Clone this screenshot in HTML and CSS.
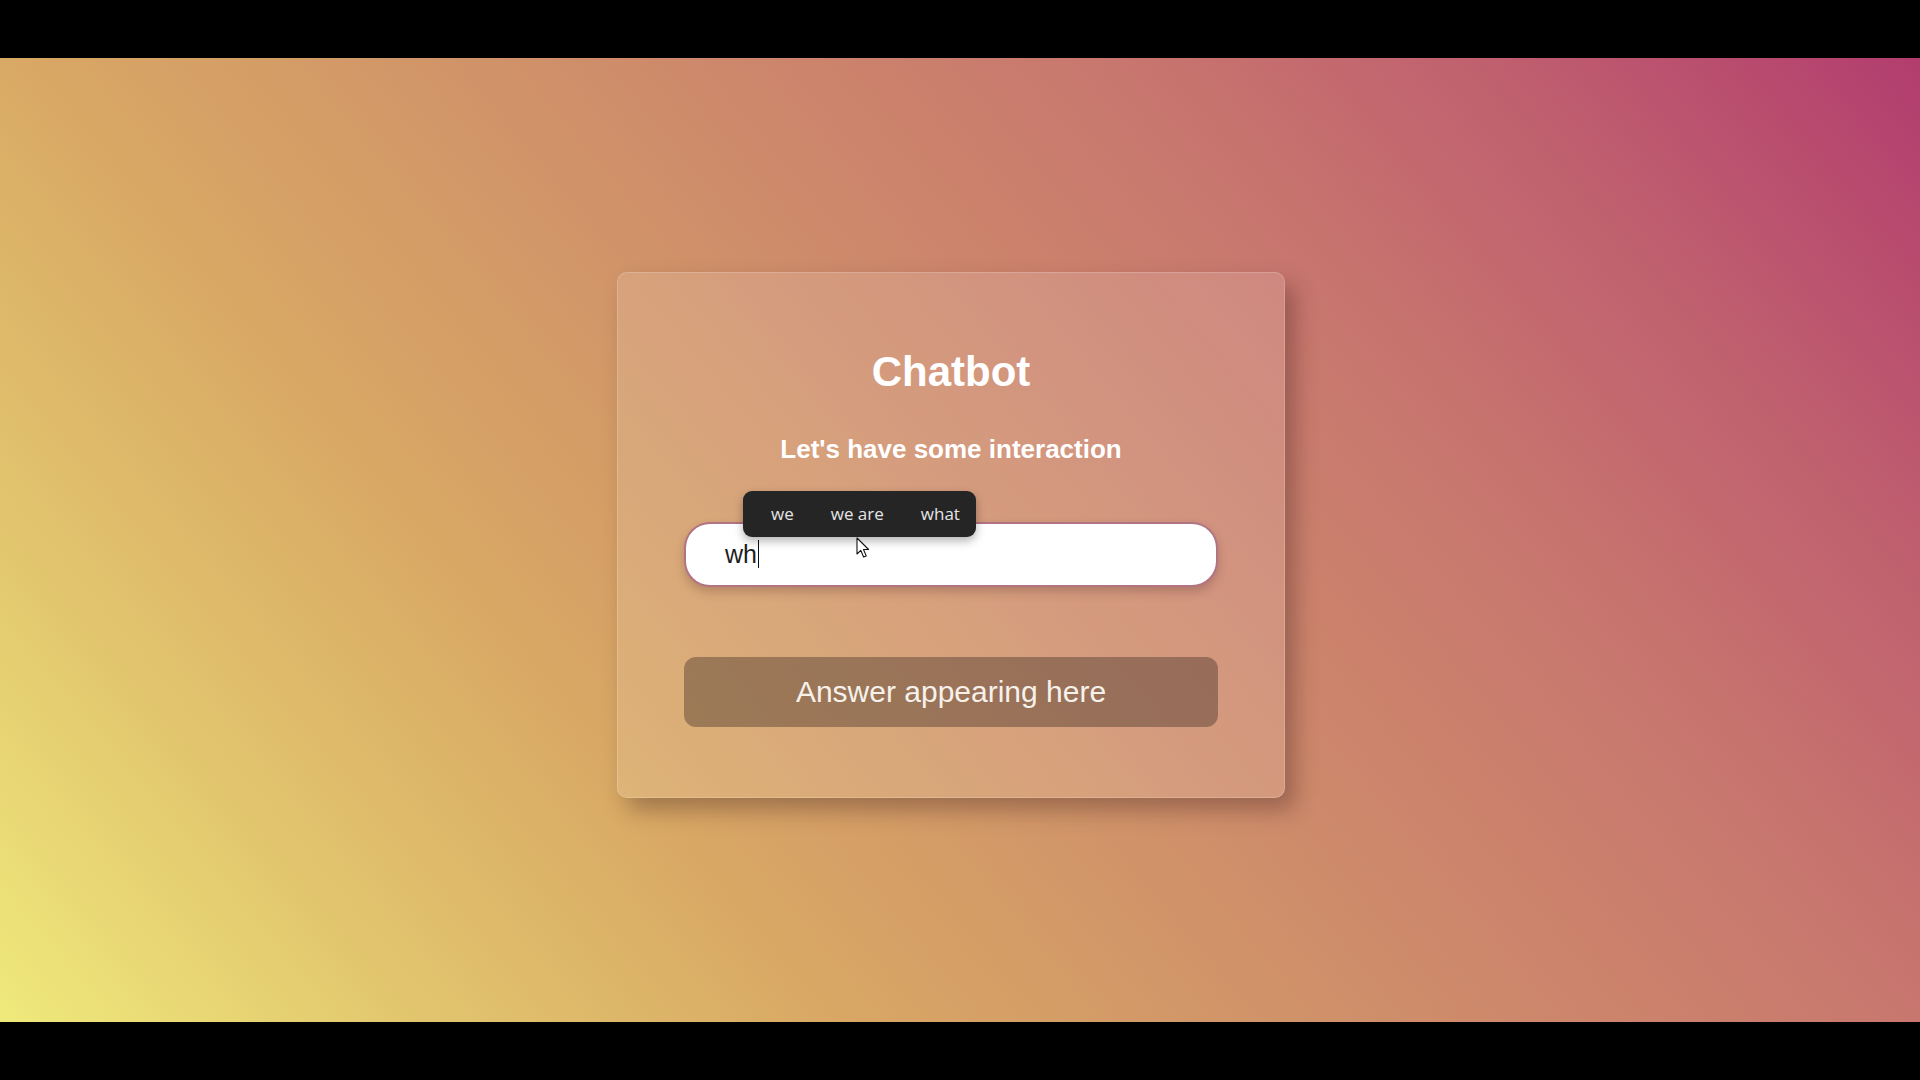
FILE: index.html
```html
<!DOCTYPE html>
<html lang="en">
<head>
<meta charset="utf-8">
<title>Chatbot</title>
<link rel="stylesheet" href="styles.css">
</head>
<body>
  <div class="bar"></div>
  <main class="stage">
    <section class="card">
      <h1 class="title">Chatbot</h1>
      <h2 class="subtitle">Let's have some interaction</h2>
      <div class="field">
        <div class="input"><span class="typed">wh</span><span class="caret"></span></div>
        <ul class="suggest">
          <li>we</li>
          <li>we are</li>
          <li>what</li>
        </ul>
        <svg class="pointer" width="15" height="22" viewBox="0 0 15 22">
          <path d="M1 1 L1 17 L4.8 13.4 L7.6 20 L10.2 18.9 L7.5 12.5 L12.6 12.5 Z" fill="#fff" stroke="#111" stroke-width="1.1" stroke-linejoin="round"/>
        </svg>
      </div>
      <div class="answer">Answer appearing here</div>
    </section>
  </main>
  <div class="bar"></div>
</body>
</html>
```
FILE: styles.css
```css
* { box-sizing: border-box; }
html, body { margin: 0; padding: 0; }
body {
  width: 1920px;
  height: 1080px;
  background: #000;
  display: flex;
  flex-direction: column;
  overflow: hidden;
  font-family: "Liberation Sans", Arial, sans-serif;
}
.bar { height: 58px; flex: none; background: #000; }
.stage {
  height: 964px;
  flex: none;
  display: flex;
  justify-content: center;
  align-items: center;
  padding: 0 18px 11px 0;
  background: linear-gradient(50deg, #efe97b 0%, #e2c66e 15%, #d8a764 31%, #cf8f6a 50%, #c8776e 70%, #c0606f 84%, #b23d6e 100%);
}
.card {
  width: 668px;
  height: 526px;
  padding: 75px 66px 70px;
  border-radius: 10px;
  background: rgba(255, 255, 255, 0.13);
  border: 1px solid rgba(255, 255, 255, 0.18);
  box-shadow: 10px 12px 22px rgba(60, 30, 30, 0.35);
  display: flex;
  flex-direction: column;
  align-items: stretch;
}
.title {
  margin: 0;
  font-size: 42px;
  line-height: 47px;
  font-weight: bold;
  color: #fff;
  text-align: center;
}
.subtitle {
  margin: 40px 0 0;
  font-size: 26px;
  line-height: 29px;
  font-weight: bold;
  color: #fff;
  text-align: center;
}
.field {
  position: relative;
  margin-top: 58px;
}
.input {
  height: 65px;
  border-radius: 26px;
  background: #fff;
  border: 2px solid rgba(150, 70, 90, 0.75);
  box-shadow: 0 5px 10px rgba(80, 40, 40, 0.25);
  padding: 0 39px;
  display: flex;
  align-items: center;
  font-size: 25px;
  color: #1d1d1d;
}
.caret {
  display: inline-block;
  width: 1.5px;
  height: 28px;
  background: #111;
  margin-left: 1px;
}
.suggest {
  position: absolute;
  left: 59px;
  top: -31px;
  margin: 0;
  padding: 0 16px 0 28px;
  list-style: none;
  height: 46px;
  display: flex;
  align-items: center;
  gap: 37px;
  background: #252525;
  border-radius: 9px;
  box-shadow: 0 4px 10px rgba(0, 0, 0, 0.3);
  font-family: "Open Sans", "Noto Sans", sans-serif;
  font-size: 17px;
  color: #e6e6e6;
}
.pointer {
  position: absolute;
  left: 172px;
  top: 15px;
}
.answer {
  margin-top: 70px;
  height: 72px;
  border-radius: 12px;
  background: rgba(70, 50, 40, 0.42);
  display: flex;
  align-items: center;
  justify-content: center;
  font-size: 30px;
  color: #f6f1ea;
}
```
